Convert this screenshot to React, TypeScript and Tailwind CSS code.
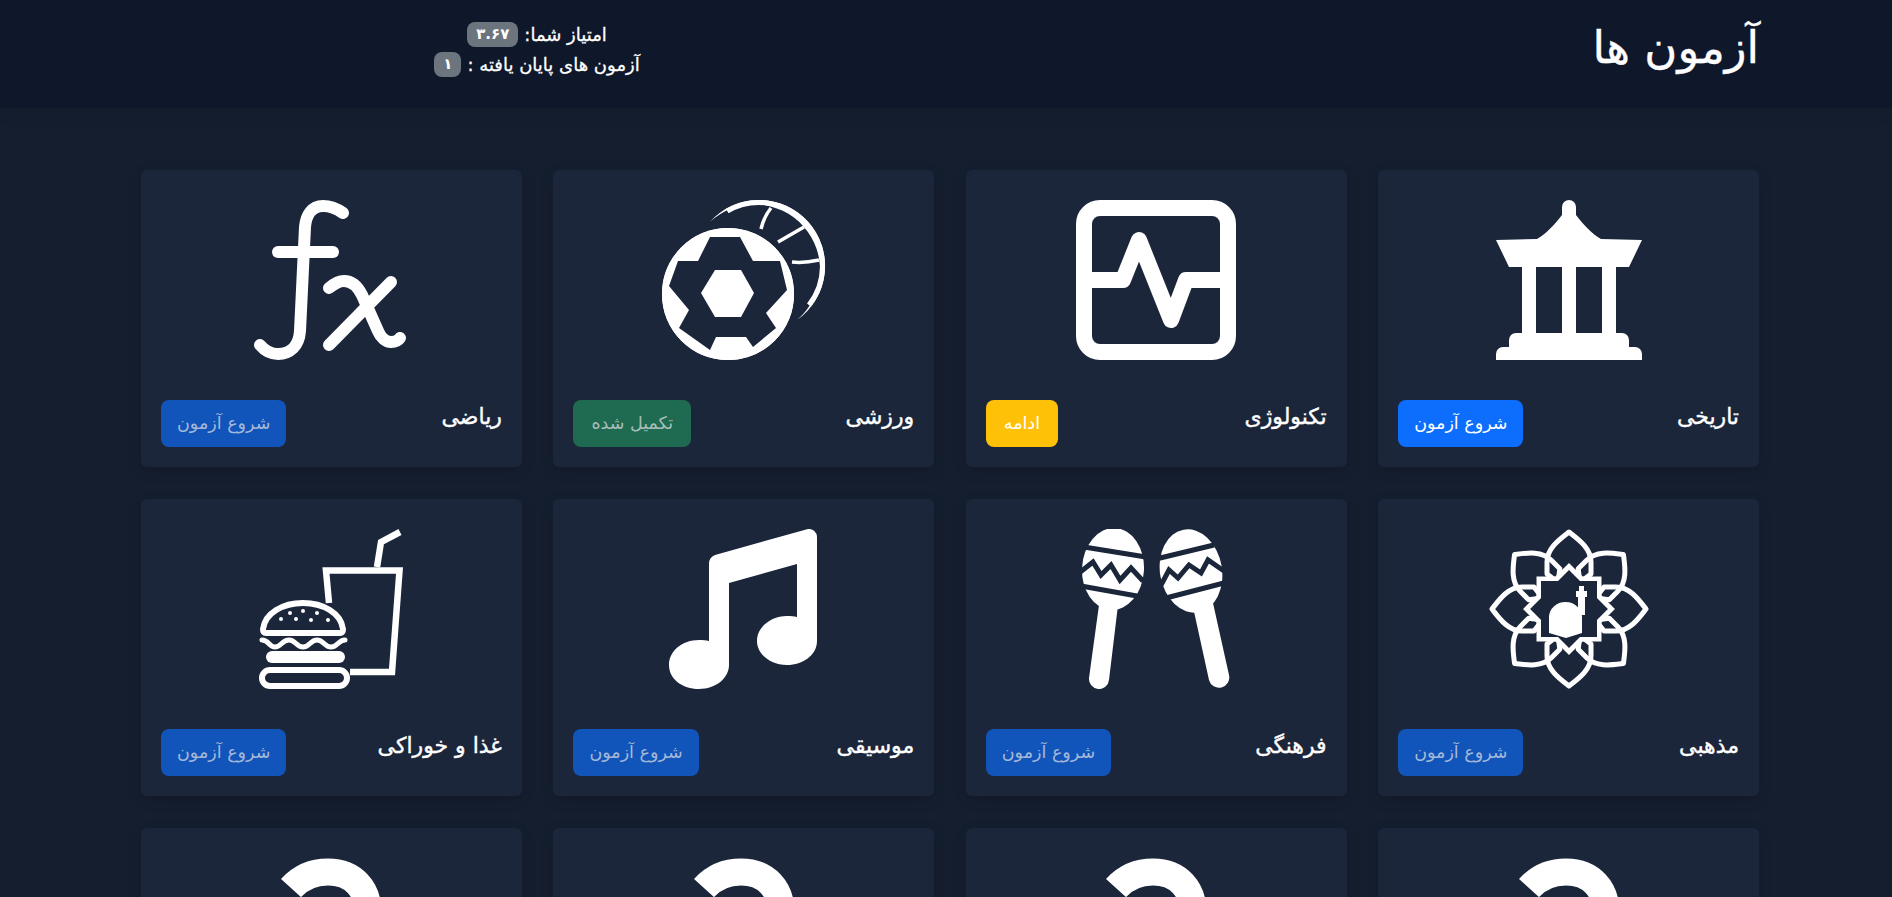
import type { ReactNode } from 'react';

const FONT = 'font-["DejaVu_Sans",sans-serif]';

function Pagoda() {
  return (
    <svg viewBox="0 0 160 160" className="w-40 h-40" fill="#fff">
      <path d="M73 7a7 7 0 0 1 14 0v8c8 10 15 18 25 24l41 1-13 27H20L7 40l41-1c10-6 17-14 25-24z" />
      <path d="M33 66h14v68H33zM73 66h14v68H73zM113 66h14v68h-14z" />
      <path d="M7 160v-6a7 7 0 0 1 7-7h6v-7a7 7 0 0 1 7-7h106a7 7 0 0 1 7 7v7h6a7 7 0 0 1 7 7v6z" />
    </svg>
  );
}

function Activity() {
  return (
    <svg viewBox="0 0 160 160" className="w-40 h-40" fill="none" stroke="#fff" strokeWidth="16" strokeLinecap="round" strokeLinejoin="round">
      <rect x="8" y="8" width="144" height="144" rx="16" />
      <path d="M8 80h39l16-40 32 80 15-40h42" />
    </svg>
  );
}

function Ball() {
  return (
    <svg viewBox="0 0 160 160" className="w-40 h-40 overflow-visible" fill="#fff">
      <path d="M46 21.800A66 66 0 1 1 133.200 119.800A65.600 65.600 0 1 0 46 21.800z" />
      <path d="M63.250 11A63.500 63.500 0 0 1 145 105.100" fill="none" stroke="#fff" strokeWidth="5" />
      <g fill="none" stroke="#fff" strokeWidth="3.500">
        <path d="M97 29c2-8 5-15 10-21M114 42l26-15M128 62c9 1 18 0 27-2" />
      </g>
      <circle cx="64" cy="94" r="66" />
      <path fill="#1b263b" d="M46 37h30l13 24h27l7 29-21 23 10 15-23 19-7-10H52l-6 13-31-22 10-18L5 86l9-25h20z" />
      <circle cx="64" cy="94" r="64.500" fill="none" stroke="#fff" strokeWidth="3" />
      <path d="M37 93l14-23h26l13 23-13 24H51z" />
    </svg>
  );
}

function Fx() {
  return (
    <svg viewBox="0 0 160 160" className="w-40 h-40" fill="none" stroke="#fff" strokeWidth="12" strokeLinecap="round" strokeLinejoin="round">
      <path d="M92 13C85 8 78 6 72 6c-11 0-17 9-18 21l-5 104c-1 15-10 23-22 23-8 0-13-3-18-9" />
      <path d="M27 52h55" />
      <path d="M78 88c6-5 10-7 15-7 9 0 14 6 18 14l16 36c3 7 8 11 13 11 4 0 7-1 9-4" />
      <path d="M140 82L78 145" />
    </svg>
  );
}

function Medallion() {
  const petals = [0, 45, 90, 135, 180, 225, 270, 315];
  return (
    <svg viewBox="0 0 160 160" className="w-40 h-40" fill="none" stroke="#fff">
      {petals.map((a) => (
        <path key={a} transform={`rotate(${a} 80 80)`} d="M58 33C58 19 71 10 80 3c9 7 22 16 22 30v12L80 62 58 45z" strokeWidth="5" strokeLinejoin="round" />
      ))}
      <rect x="50" y="50" width="60" height="60" fill="#1b263b" strokeWidth="5" />
      <rect x="50" y="50" width="60" height="60" fill="#1b263b" strokeWidth="5" transform="rotate(45 80 80)" />
      <rect x="52" y="52" width="56" height="56" fill="#1b263b" stroke="none" />
      <path d="M60 104V88a16.500 15 0 0 1 33 0v16l-16 5z" fill="#fff" stroke="none" />
      <path d="M89 86V68h-2v-6h3v-5h5v5h3v6h-2v18z" fill="#fff" stroke="none" />
    </svg>
  );
}

function Maracas() {
  return (
    <svg viewBox="0 0 160 160" className="w-40 h-40" fill="#fff">
      <path d="M23 76L13 149a10 10 0 0 0 20 2L42 76zM117 78l16 73a10 10 0 0 0 20-5L137 74z" />
      <ellipse cx="37" cy="40" rx="31" ry="41" transform="rotate(3 37 40)" />
      <ellipse cx="115" cy="42" rx="31" ry="42" transform="rotate(-10 115 42)" />
      <g fill="none" stroke="#1b263b" strokeWidth="5">
        <path d="M8 18l62 10M3 44l14-11 8 13 10-10 9 15 11-12 12 13M5 57l56 10" />
        <path d="M80 30l58-14M84 58l9-17 9 8 11-13 12 8 7-13 16 11M90 69l58-15" />
      </g>
    </svg>
  );
}

function Music() {
  return (
    <svg viewBox="0 0 160 160" className="w-40 h-40" fill="#fff">
      <path d="M51 26L144 0a8 8 0 0 1 9 8v104c0 14-14 24-30 24-17 0-30-11-30-24 0-14 14-25 30-25 4 0 7 0 10 1V35L65 54v82c0 13-13 24-30 24-17 0-30-10-30-24 0-14 13-25 30-25 4 0 7 0 10 1V36a10 10 0 0 1 6-10z" />
    </svg>
  );
}

function Food() {
  return (
    <svg viewBox="0 0 160 160" className="w-40 h-40" fill="none" stroke="#fff" strokeWidth="6.500">
      <path d="M78 74L75 41.500H148.500L141 143H99" />
      <path d="M126 38l4-25 19-10" />
      <path d="M12 100c2-16 20-26 40-26s38 10 40 26c0 3-1 4-3 4H15c-2 0-3-1-3-4z" strokeWidth="6" />
      <path d="M11 111c7 0 7 7 13 7s7-7 14-7 7 7 14 7 7-7 14-7 7 7 14 7 7-7 14-7" strokeLinecap="round" strokeWidth="5" />
      <rect x="15" y="122" width="79" height="12" rx="6" fill="#fff" stroke="none" />
      <rect x="11" y="141" width="85" height="16" rx="8" strokeWidth="6" />
      <g fill="#fff" stroke="none">
        <circle cx="30" cy="90" r="2" /><circle cx="39" cy="84" r="2" /><circle cx="52" cy="82" r="2" />
        <circle cx="45" cy="90" r="2" /><circle cx="60" cy="91" r="2" /><circle cx="66" cy="84" r="2" /><circle cx="77" cy="91" r="2" />
      </g>
    </svg>
  );
}

function Question() {
  return (
    <svg viewBox="0 0 160 160" className="w-40 h-40" fill="none" stroke="#fff" strokeWidth="27">
      <path d="M40 30C50 19 62 14 77 14c26 0 40 18 40 40 0 20-12 30-24 40-9 8-13 16-13 28" />
    </svg>
  );
}

type Status = 'start' | 'dim' | 'done' | 'resume';

const BUTTONS: Record<Status, { label: string; cls: string }> = {
  start: { label: 'شروع آزمون', cls: 'px-4 bg-[#0d6efd] text-white' },
  dim: { label: 'شروع آزمون', cls: 'px-4 bg-[#1155ba] text-[#a5b8d8]' },
  done: { label: 'تکمیل شده', cls: 'px-[18px] bg-[#1e6b51] text-[#a7bfbb]' },
  resume: { label: 'ادامه', cls: 'px-[18px] bg-[#ffc107] text-white' },
};

const cards: { title?: string; icon: ReactNode; status?: Status }[] = [
  { title: 'تاریخی', icon: <Pagoda />, status: 'start' },
  { title: 'تکنولوژی', icon: <Activity />, status: 'resume' },
  { title: 'ورزشی', icon: <Ball />, status: 'done' },
  { title: 'ریاضی', icon: <Fx />, status: 'dim' },
  { title: 'مذهبی', icon: <Medallion />, status: 'dim' },
  { title: 'فرهنگی', icon: <Maracas />, status: 'dim' },
  { title: 'موسیقی', icon: <Music />, status: 'dim' },
  { title: 'غذا و خوراکی', icon: <Food />, status: 'dim' },
  { icon: <Question /> },
  { icon: <Question /> },
  { icon: <Question /> },
  { icon: <Question /> },
];

function Badge({ children }: { children: ReactNode }) {
  return (
    <span className="inline-flex h-[25px] items-center rounded-lg bg-[#6c757d] px-[9px] text-[15px] font-bold text-white [-webkit-text-stroke:0]">
      {children}
    </span>
  );
}

export default function App() {
  return (
    <div dir="rtl" className={`h-[897px] overflow-hidden bg-[#151e2f] text-white ${FONT}`}>
      <header className="flex h-[108px] items-start justify-between bg-[#0f172a] pr-[133px] pl-[387px] shadow-[0_4px_16px_rgba(0,0,0,0.08)]">
        <h1 className="mt-[20px] text-[45px] leading-[56px] font-normal [-webkit-text-stroke:0.4px_white]">آزمون ها</h1>
        <div className="mt-[22px] flex w-[300px] flex-col items-center gap-[5px] text-[18px] leading-[25px] [-webkit-text-stroke:0.3px_white]">
          <div className="flex items-center gap-[6px]">
            <span>امتیاز شما:</span>
            <Badge>۳.۶۷</Badge>
          </div>
          <div className="flex items-center gap-[6px]">
            <span>آزمون های پایان یافته :</span>
            <Badge>۱</Badge>
          </div>
        </div>
      </header>
      <main className="mt-[62px] mr-[133px] ml-[141px] grid grid-cols-4 gap-x-[31.5px] gap-y-[32px]">
        {cards.map((c, i) => {
          const b = c.status ? BUTTONS[c.status] : null;
          return (
            <div key={i} className="h-[297px] rounded-md bg-[#1b263b] px-5 pt-[30px] shadow-[0_4px_14px_rgba(0,0,0,0.14)]">
              <div className="flex justify-center">{c.icon}</div>
              {b && (
                <div className="mt-10 flex items-start justify-between">
                  <span className="mt-[3px] text-[22px] leading-[28px] [-webkit-text-stroke:0.4px_white]">{c.title}</span>
                  <button className={`h-[47px] rounded-lg text-[17.5px] ${b.cls}`}>{b.label}</button>
                </div>
              )}
            </div>
          );
        })}
      </main>
    </div>
  );
}
